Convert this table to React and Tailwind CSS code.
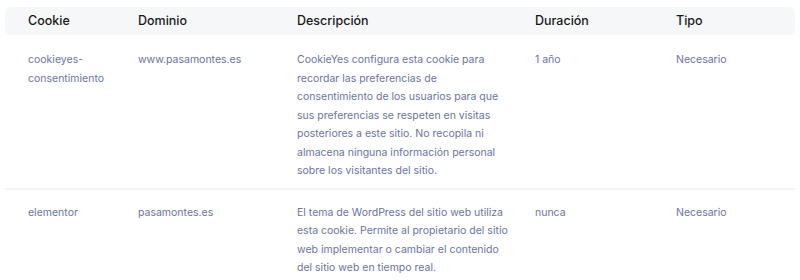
const rows = [
  {
    cookie: "cookieyes-consentimiento",
    domain: "www.pasamontes.es",
    desc: "CookieYes configura esta cookie para recordar las preferencias de consentimiento de los usuarios para que sus preferencias se respeten en visitas posteriores a este sitio. No recopila ni almacena ninguna información personal sobre los visitantes del sitio.",
    duration: "1 año",
    type: "Necesario",
  },
  {
    cookie: "elementor",
    domain: "pasamontes.es",
    desc: "El tema de WordPress del sitio web utiliza esta cookie. Permite al propietario del sitio web implementar o cambiar el contenido del sitio web en tiempo real.",
    duration: "nunca",
    type: "Necesario",
  },
];

const cols = "grid grid-cols-[110px_159px_238px_141px_1fr] px-[23px]";

export default function App() {
  return (
    <div className="h-[280px] w-[800px] overflow-hidden bg-white px-[5px] pt-[7px] font-['Inter','Liberation_Sans',sans-serif]">
      <div className={`${cols} h-[28px] items-center rounded-md bg-[#f6f7f9] text-[12.5px] font-medium text-[#1a1a1a]`}>
        <div>Cookie</div>
        <div>Dominio</div>
        <div>Descripción</div>
        <div>Duración</div>
        <div>Tipo</div>
      </div>
      {rows.map((r, i) => (
        <div
          key={r.cookie}
          className={`${cols} text-[10.5px] leading-[18.5px] text-[#6b74a0] ${
            i === 0 ? "border-b-2 border-[#f2f3f5] pt-[16px] pb-[7px]" : "pt-[14px]"
          }`}
        >
          <div className="pr-5 break-words">{r.cookie}</div>
          <div className="pr-5">{r.domain}</div>
          <div className="pr-[23px]">{r.desc}</div>
          <div className="pr-5">{r.duration}</div>
          <div>{r.type}</div>
        </div>
      ))}
    </div>
  );
}
